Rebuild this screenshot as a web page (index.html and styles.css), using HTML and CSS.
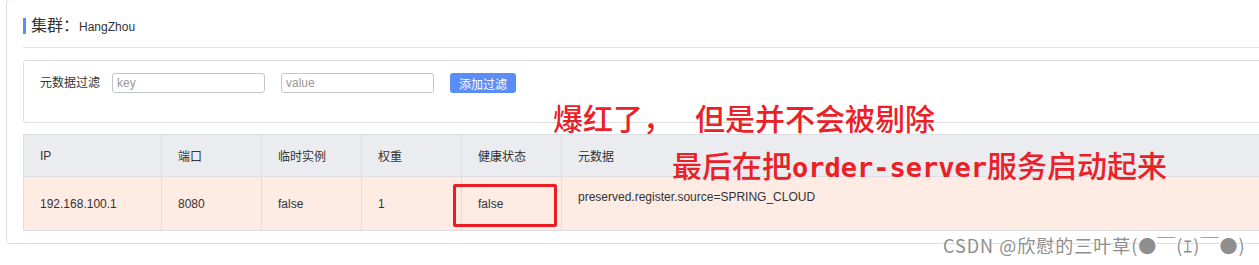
FILE: index.html
```html
<!DOCTYPE html>
<html lang="zh-CN">
<head>
    <meta charset="UTF-8">
    <title>集群: HangZhou</title>
    <link rel="stylesheet" href="styles.css">
</head>
<body>
    <div class="panel">
        <div class="cluster-title">集群：<span class="cluster-name">HangZhou</span></div>

        <div class="filter-box">
            <span class="filter-label">元数据过滤</span>
            <input class="filter-input" type="text" placeholder="key">
            <input class="filter-input" type="text" placeholder="value">
            <button class="btn-primary">添加过滤</button>
        </div>

        <table class="instance-table">
            <colgroup>
                <col style="width:138px">
                <col style="width:100px">
                <col style="width:100px">
                <col style="width:100px">
                <col style="width:100px">
                <col>
            </colgroup>
            <thead>
                <tr>
                    <th>IP</th>
                    <th>端口</th>
                    <th>临时实例</th>
                    <th>权重</th>
                    <th>健康状态</th>
                    <th>元数据</th>
                </tr>
            </thead>
            <tbody>
                <tr class="row-unhealthy">
                    <td>192.168.100.1</td>
                    <td>8080</td>
                    <td>false</td>
                    <td>1</td>
                    <td>false</td>
                    <td class="meta-cell">preserved.register.source=SPRING_CLOUD</td>
                </tr>
            </tbody>
        </table>

        <!-- 标注 -->
        <div class="mark-box"></div>
        <div class="note note-1">爆红了，<span class="note-rest">但是并不会被剔除</span></div>
        <div class="note note-2">最后在把<span class="mono">order-server</span>服务启动起来</div>
    </div>

    <div class="watermark">CSDN @欣慰的三叶草(●￣(ｴ)￣●)</div>
</body>
</html>
```

FILE: styles.css
```css
body {
    margin: 0;
    overflow: hidden;
    height: 265px;
    position: relative;
    background: #fff;
    font-family: "Liberation Sans", "Noto Sans CJK SC", sans-serif;
    font-size: 12px;
    color: #333;
}

.panel {
    position: relative;
    width: 1300px;
    margin: -1px 0 0 6px;
    padding: 0 0 12px 16px;
    border: 1px solid #dcdee3;
    border-radius: 4px;
}

.cluster-title {
    margin-top: 18px;
    padding-bottom: 12px;
    border-bottom: 1px solid #e4e5e8;
    font-size: 16px;
    line-height: 16px;
    color: #333;
    position: relative;
    padding-left: 8px;
}

.cluster-title::before {
    content: "";
    position: absolute;
    left: 0;
    top: 0;
    width: 3px;
    height: 16px;
    background: #5b8ef3;
}

.cluster-name {
    font-size: 12px;
}

.filter-box {
    display: flex;
    align-items: flex-start;
    margin-top: 12px;
    height: 63px;
    padding: 12px 0 0 16px;
    box-sizing: border-box;
    border: 1px solid #dcdee3;
    border-radius: 3px;
}

.filter-label {
    width: 60px;
    line-height: 20px;
    margin-right: 12px;
    color: #333;
}

.filter-input {
    width: 153px;
    height: 20px;
    box-sizing: border-box;
    margin: 0 16px 0 0;
    padding: 0 4px;
    border: 1px solid #c4c6cf;
    border-radius: 3px;
    font-family: "Liberation Sans", sans-serif;
    font-size: 12px;
    color: #333;
}

.filter-input::placeholder {
    color: #999;
}

.btn-primary {
    width: 66px;
    height: 20px;
    padding: 0;
    border: none;
    border-radius: 3px;
    background: #5a8df6;
    color: #fff;
    font-family: "Noto Sans CJK SC", sans-serif;
    font-size: 12px;
}

.instance-table {
    width: 1284px;
    margin-top: 11px;
    border-collapse: collapse;
    table-layout: fixed;
}

.instance-table th,
.instance-table td {
    border: 1px solid #dcdee3;
    padding: 0 0 0 16px;
    text-align: left;
    font-weight: normal;
}

.instance-table th {
    height: 41px;
    background: #ebecf0;
    color: #333;
}

.instance-table td {
    height: 53px;
    color: #333;
}

.row-unhealthy td {
    background: #feebe4;
}

.instance-table td.meta-cell {
    vertical-align: top;
    padding-top: 13px;
    height: 40px;
}

.mark-box {
    position: absolute;
    left: 446px;
    top: 184px;
    width: 98px;
    height: 37px;
    border: 3px solid #ec1c24;
    border-radius: 2px;
}

.note {
    position: absolute;
    color: #ec2027;
    font-family: "Noto Sans CJK SC", sans-serif;
    font-size: 30px;
    font-weight: 500;
    line-height: 34px;
    white-space: nowrap;
}

.note-1 {
    left: 546px;
    top: 100px;
}

.note-rest {
    margin-left: 22px;
}

.note-2 {
    left: 665px;
    top: 147px;
}

.mono {
    font-family: "DejaVu Sans Mono", monospace;
    font-weight: bold;
    font-size: 27px;
}

.watermark {
    position: absolute;
    left: 943px;
    top: 233px;
    font-family: "Noto Sans CJK SC", sans-serif;
    font-size: 18px;
    line-height: 24px;
    letter-spacing: 1px;
    color: #8e8e8e;
    text-shadow: 0 0 2px #fff, 0 0 2px #fff;
    white-space: nowrap;
}
```
